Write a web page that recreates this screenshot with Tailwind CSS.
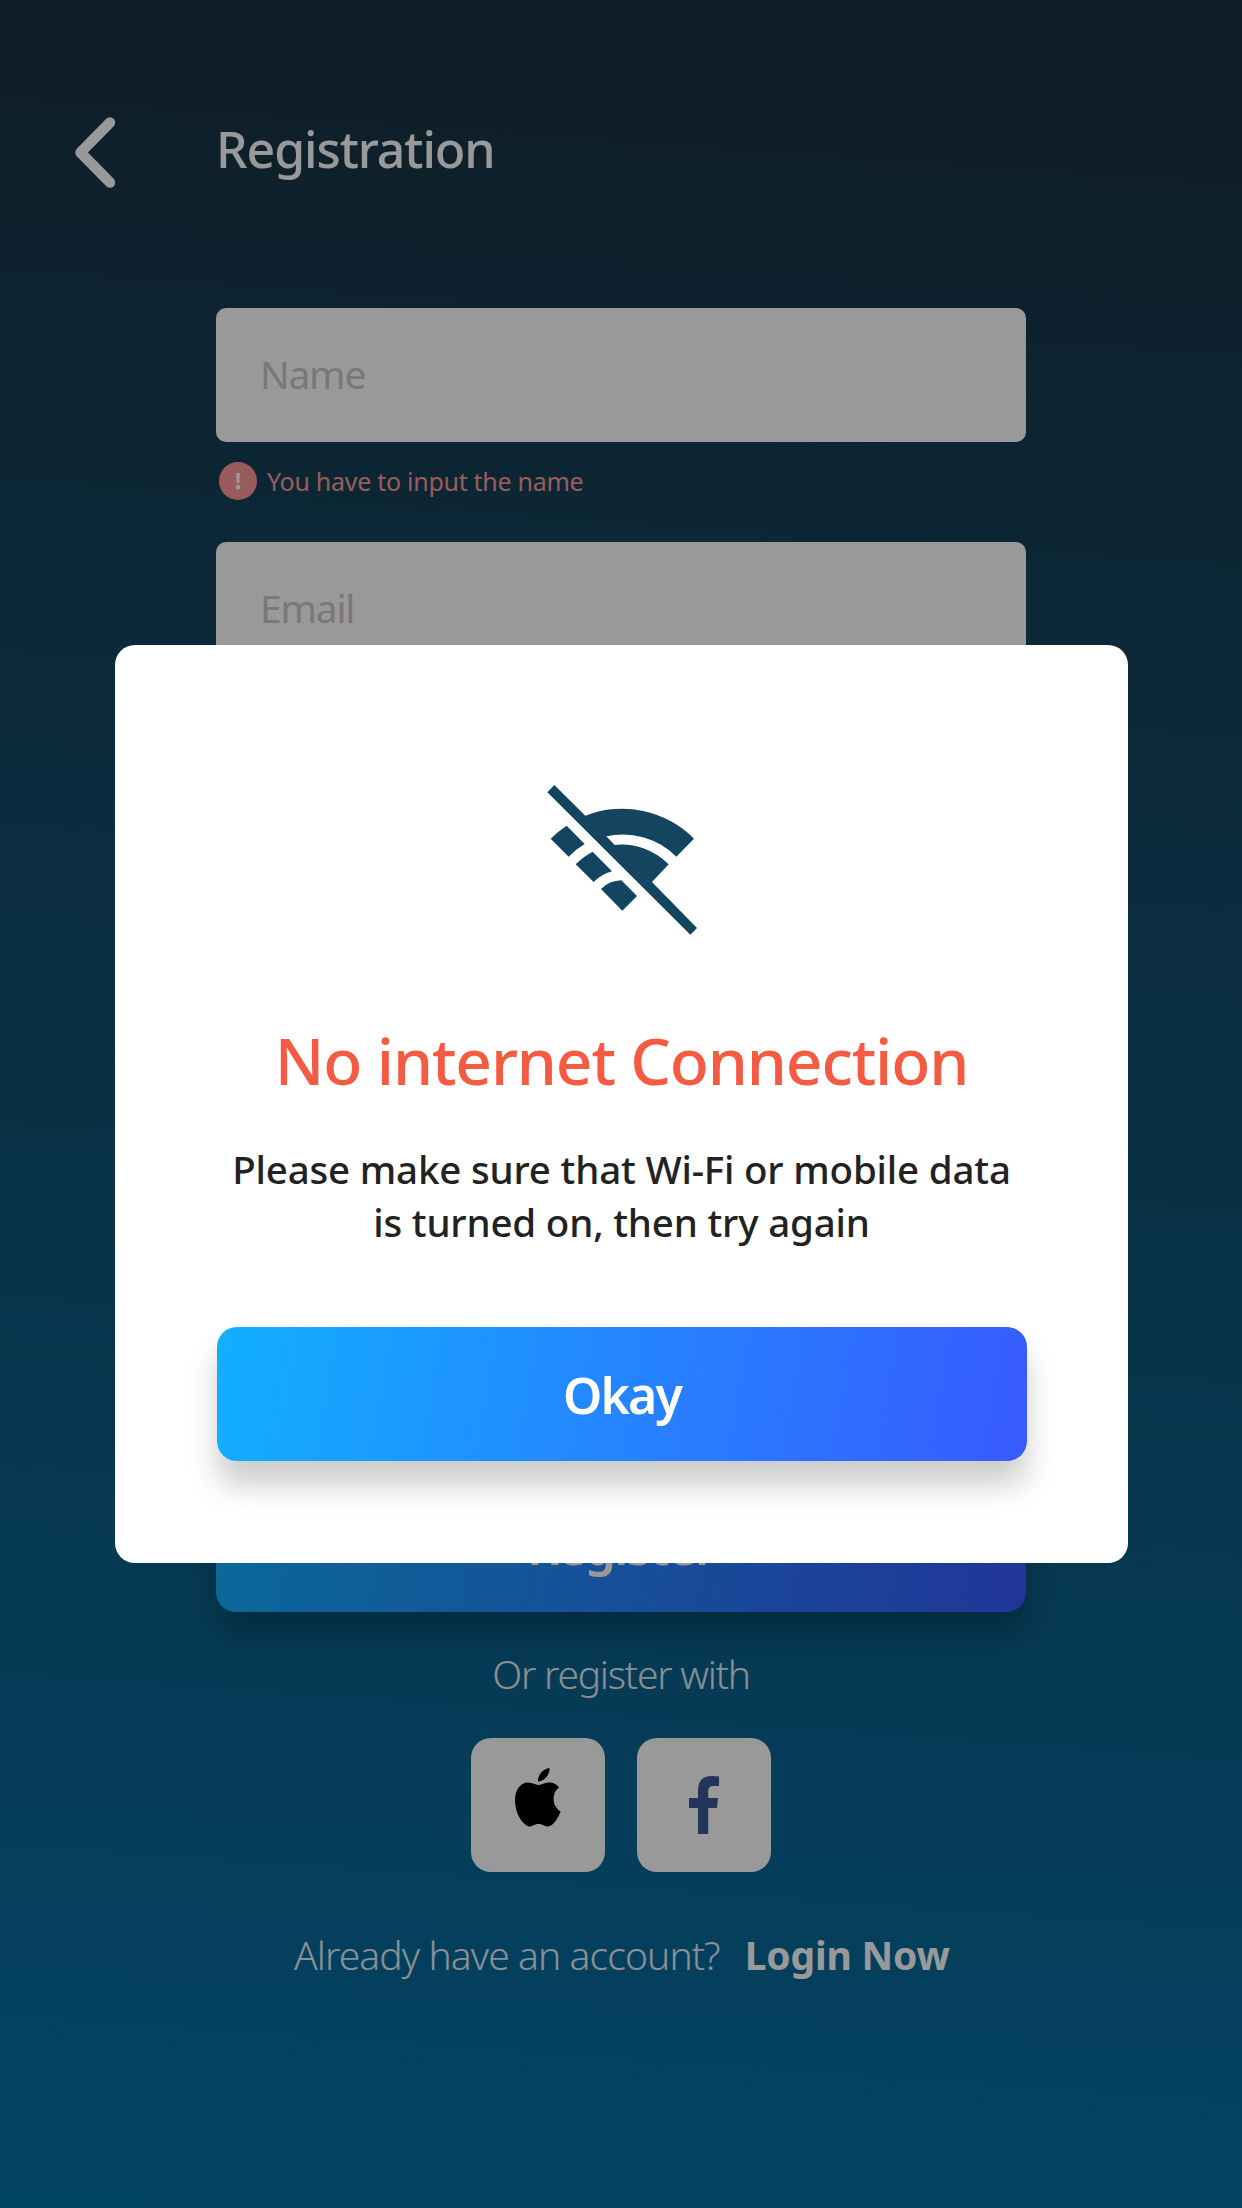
<!DOCTYPE html>
<html lang="en"><head><meta charset="utf-8"><title>Registration</title>
<script src="https://cdn.jsdelivr.net/npm/@tailwindcss/browser@4"></script></head>
<body class="font-['Noto_Sans','Open_Sans',sans-serif]">
<div class="relative w-[1242px] h-[2208px] overflow-hidden bg-linear-[184deg,#1a303e,#0573a9]">
<main class="flex flex-col h-full px-[216px]">
<header class="relative mt-[116px] h-[72px] flex items-center">
<svg class="absolute -left-[142px] top-0 w-[42px] h-[72px]" viewBox="0 0 42 72" fill="none" stroke="#fff" stroke-width="10.500" stroke-linecap="round" stroke-linejoin="round"><path d="M36 6.500 6.500 36.500 36 66.500"/></svg>
<h1 class="text-[50px] leading-[68px] pb-[6px] font-[550] text-white tracking-[-1.08px]">Registration</h1>
</header>
<div class="mt-[120px] h-[134px] rounded-[10px] bg-white px-[44px] pb-[2px] flex items-center text-[39px] text-[#c8c8ca] tracking-[-1.2px]">Name</div>
<div class="mt-[20px] h-[38px] ml-[3px] flex items-center gap-[10px] text-[25px] text-[#ff9898] tracking-[-0.28px]"><svg class="size-[38px]" viewBox="0 0 38 38"><circle cx="19" cy="19" r="19" fill="#ff9898"/><path d="M17 11h4l-.6 10h-2.800z" fill="#fff"/><circle cx="19" cy="25" r="2.400" fill="#fff"/></svg><span class="pt-[2px]">You have to input the name</span></div>
<div class="mt-[42px] h-[134px] rounded-[10px] bg-white px-[44px] pb-[2px] flex items-center text-[39px] text-[#c8c8ca] tracking-[-1.2px]">Email</div>
<div class="mt-[802px] h-[134px] rounded-[20px] bg-linear-[100deg,#12afff,#385aff] shadow-[0_24px_30px_rgba(0,0,0,0.22)] flex items-center justify-center pt-[2px] text-[50px] font-semibold text-white tracking-[-1.9px]">Register</div>
<p class="mt-[36px] h-[52px] leading-[52px] text-center text-[39px] font-light text-white/90 tracking-[-1.2px]">Or register with</p>
<div class="mt-[38px] flex justify-center gap-8">
<div class="size-[134px] rounded-[20px] bg-white"><svg class="size-full" viewBox="0 0 134 134"><path d="M67 43.500c-.5-6 4.500-12.500 11.500-13.500C79 37 73 43.500 67 43.500ZM88 49.500c-8 6-7 19 1.700 24C87 80 82 88.500 77 88.500c-4 0-5-2.500-9.500-2.500S62 88.500 58 88.500C50 86 44 73 44 62.500 44 51 50 44.500 57 44.500c4.500 0 7.500 2.500 10.500 2.500s6-2.500 11-2.500c4 0 7.500 2 9.500 5Z" fill="#000"/></svg></div>
<div class="size-[134px] rounded-[20px] bg-white"><svg class="size-full" viewBox="0 0 134 134"><path d="M82 38.500v9.500h-6q-4.800 0-4.800 5.500v6.500h9.800l-1 10h-8.800v26H61v-26h-9v-10h9v-7.500Q61 38 75 38 79 38 82 38.500Z" fill="#3b5998"/></svg></div>
</div>
<p class="mt-[57px] h-[52px] leading-[52px] flex ml-[78px] text-[39px] text-white gap-[25px] whitespace-nowrap"><span class="font-light text-white/90 tracking-[-0.9px]">Already have an account?</span><b class="tracking-[-0.2px]">Login Now</b></p>
</main>
<div class="absolute inset-0 bg-black/40"></div>
<section class="absolute left-[115px] top-[645px] w-[1013px] h-[918px] rounded-[20px] bg-white px-[102px] flex flex-col">
<svg class="self-center mt-[139px] w-[152px] h-[152px]" viewBox="77 72 456 456" fill="#144560"><path d="M102 75 195 167A304 304 0 0 1 521 236L468 290A229 229 0 0 0 258 229L283 255A197 197 0 0 1 445 313L395 366 530 504 510 524 81 97ZM91 236A304 304 0 0 1 139 197L193 252A229 229 0 0 0 145 290ZM166 313A197 197 0 0 1 217 275L275 334A122 122 0 0 0 220 366ZM242 387A91 91 0 0 1 303 361L350 408 306 452Z"/></svg>
<h2 class="mt-[80px] h-[90px] leading-[90px] text-center whitespace-nowrap text-[64px] font-[550] text-[#f55a42] tracking-[-1.13px]">No internet Connection</h2>
<p class="mt-[37px] leading-[53px] text-center whitespace-nowrap text-[38.500px] font-medium text-[#222] tracking-[-0.18px]">Please make sure that Wi-Fi or mobile data<br>is turned on, then try again</p>
<button class="mt-[78px] h-[134px] w-[810px] shrink-0 pt-[3px] rounded-[20px] bg-linear-[100deg,#12afff,#385aff] shadow-[0_24px_30px_rgba(0,0,0,0.2)] text-[50px] font-semibold text-white tracking-[-1.9px]">Okay</button>
</section>
</div>
</body></html>
